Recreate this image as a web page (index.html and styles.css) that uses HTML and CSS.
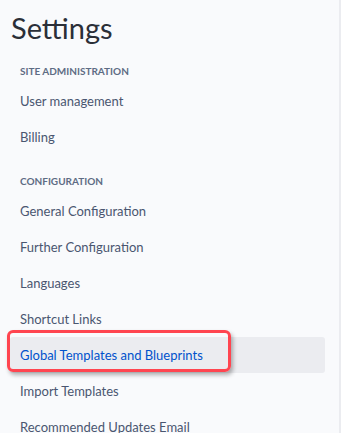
FILE: index.html
```html
<!DOCTYPE html>
<html lang="en">
<head>
    <meta charset="utf-8">
    <title>Settings</title>
    <link rel="stylesheet" href="styles.css">
</head>
<body>
<div class="sidebar">
    <h1 class="title">Settings</h1>
    <div class="section">
        <h4 class="section-label">Site administration</h4>
        <a class="nav-item" href="#">User management</a>
        <a class="nav-item" href="#">Billing</a>
    </div>
    <div class="section">
        <h4 class="section-label">Configuration</h4>
        <a class="nav-item" href="#">General Configuration</a>
        <a class="nav-item" href="#">Further Configuration</a>
        <a class="nav-item" href="#">Languages</a>
        <a class="nav-item" href="#">Shortcut Links</a>
        <a class="nav-item selected" href="#">Global Templates and Blueprints</a>
        <a class="nav-item" href="#">Import Templates</a>
        <a class="nav-item" href="#">Recommended Updates Email</a>
    </div>
</div>
</body>
</html>
```

FILE: styles.css
```css
html, body {
    margin: 0;
    height: 100%;
    overflow: hidden;
}
body {
    background: #f9fafc;
    font-family: Lato, "Noto Sans", sans-serif;
}
.sidebar {
    box-sizing: border-box;
    width: 341px;
    height: 100%;
    padding: 0 14px 0 10px;
    border-right: 2px solid #ebecf0;
}
.title {
    margin: 0;
    padding: 10px 0 0 1px;
    font-size: 29px;
    line-height: 35px;
    font-weight: 400;
    color: #2b2f38;
}
.section-label {
    margin: 18px 0 4px;
    padding: 0 10px;
    font-size: 10px;
    line-height: 16px;
    font-weight: 700;
    text-transform: uppercase;
    color: #5e6c84;
}
.nav-item {
    display: block;
    position: relative;
    height: 36px;
    padding: 0 10px;
    line-height: 36px;
    font-size: 13px;
    color: #4a5670;
    text-decoration: none;
    border-radius: 3px;
}
.nav-item.selected {
    background: #ebecf0;
    color: #0052cc;
}
/* annotation box drawn over the selected row */
.nav-item.selected::after {
    content: "";
    position: absolute;
    left: -3px;
    top: -7px;
    width: 224px;
    height: 42px;
    box-sizing: border-box;
    border: 3px solid #ff4550;
    border-radius: 6px;
    box-shadow: 2px 3px 4px rgba(0, 0, 0, 0.3);
}
```
